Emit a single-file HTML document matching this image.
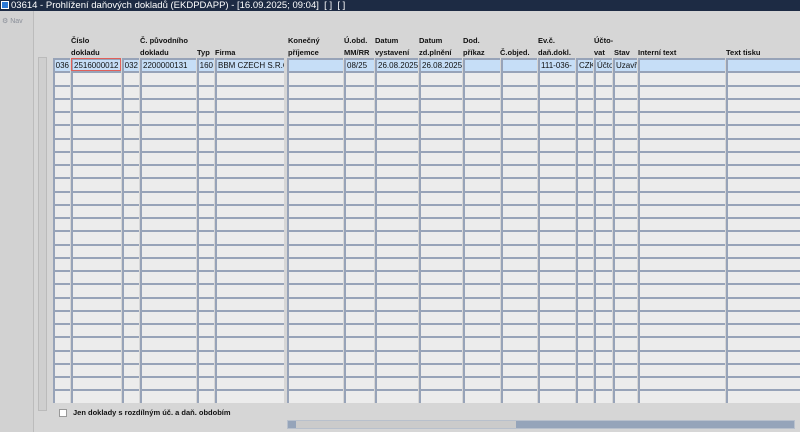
<!DOCTYPE html>
<html><head><meta charset="utf-8"><style>
body{margin:0;width:800px;height:432px;overflow:hidden;background:#d6d6d6;font-family:"Liberation Sans",sans-serif;position:relative}
.t{position:absolute;left:0;top:0;width:800px;height:11px;background:#1d2b44;color:#fff;font-size:9.5px;line-height:11px;white-space:nowrap}
.t i{display:inline-block;width:8px;height:8px;background:#2d7ad6;margin:1px 2px 0 1px;vertical-align:top;border:1px solid #fff;box-sizing:border-box}
.lp{position:absolute;left:0;top:11px;width:33px;height:421px;background:#d2d2d2;border-right:1px solid #bcbcbc}
.nav{position:absolute;left:2px;top:6px;font-size:7px;color:#8a8f99}
.h{position:absolute;font-size:7.5px;font-weight:bold;line-height:12px;color:#111;white-space:nowrap}
.c{position:absolute;background:#ececec;border-left:2px solid #97a3b8;border-top:2px solid #97a3b8;font-size:8px;overflow:hidden;white-space:nowrap;color:#111}
.s{background:#c6def7}
.vs{position:absolute;left:38px;top:57px;width:9px;height:354px;background:#cfcfcf;border:1px solid #bbb;box-sizing:border-box}
.hs{position:absolute;left:287px;top:420px;width:508px;height:9px;background:#95a4ba;border:1px solid #b8c0cc;box-sizing:border-box}
.hs b{position:absolute;left:8px;top:0;width:220px;height:7px;background:#cbcbcb}
</style></head><body>
<div class="t"><i></i>03614 - Prohlížení daňových dokladů (EKDPDAPP) - [16.09.2025; 09:04]&nbsp; [ ]&nbsp; [ ]</div>
<div class="lp"><div class="nav">&#9881; Nav</div></div>
<div class="vs"></div>
<div class="hs"><b></b></div>
<div class="h" style="left:71px;top:35px">Číslo<br>dokladu</div>
<div class="h" style="left:140px;top:35px">Č. původního<br>dokladu</div>
<div class="h" style="left:197px;top:47px">Typ</div>
<div class="h" style="left:215px;top:47px">Firma</div>
<div class="h" style="left:288px;top:35px">Konečný<br>příjemce</div>
<div class="h" style="left:344px;top:35px">Ú.obd.<br>MM/RR</div>
<div class="h" style="left:375px;top:35px">Datum<br>vystavení</div>
<div class="h" style="left:419px;top:35px">Datum<br>zd.plnění</div>
<div class="h" style="left:463px;top:35px">Dod.<br>příkaz</div>
<div class="h" style="left:500px;top:47px">Č.objed.</div>
<div class="h" style="left:538px;top:35px">Ev.č.<br>daň.dokl.</div>
<div class="h" style="left:594px;top:35px">Účto-<br>vat</div>
<div class="h" style="left:614px;top:47px">Stav</div>
<div class="h" style="left:638px;top:47px">Interní text</div>
<div class="h" style="left:726px;top:47px">Text tisku</div>
<div id="g"></div>
<div style="position:absolute;left:59px;top:409px;width:6px;height:6px;background:#fff;border:1px solid #999"></div>
<div class="h" style="left:73px;top:407px">Jen doklady s rozdílným úč. a daň. obdobím</div>
<script>
var cols=[[53,70],[71,121],[122,139],[140,196],[197,214],[215,284],[287,343],[344,374],[375,418],[419,462],[463,500],[501,537],[538,575],[576,593],[594,612],[613,637],[638,725],[726,800]];
var v=["036","2516000012","032","2200000131","160","BBM CZECH S.R.O.","","08/25","26.08.2025","26.08.2025","","","111-036-","CZK","Účtov","Uzavře","",""];
var al=[1,0,1,0,1,0,0,0,0,0,0,0,0,0,0,0,0,0];
var h="";
for(var r=0;r<26;r++){var y=Math.round(58+r*13.25);var y2=Math.round(58+(r+1)*13.25);var hh=y2-y-2;
for(var i=0;i<cols.length;i++){var w=cols[i][1]-cols[i][0]-2;
var st="left:"+cols[i][0]+"px;top:"+y+"px;height:"+hh+"px;line-height:"+hh+"px;";
var t="";
if(r==0){t=v[i];if(al[i])st+="text-align:right;padding-right:1px;width:"+(w-1)+"px;";else st+="padding-left:1px;width:"+(w-1)+"px;";}else st+="width:"+w+"px;";
if(r==0&&i==1)st+="outline:1px solid #e0605a;outline-offset:-1px;";
h+='<div class="c'+(r==0?' s':'')+'" style="'+st+'">'+t+'</div>';}}
document.getElementById("g").innerHTML=h;
</script>
</body></html>
